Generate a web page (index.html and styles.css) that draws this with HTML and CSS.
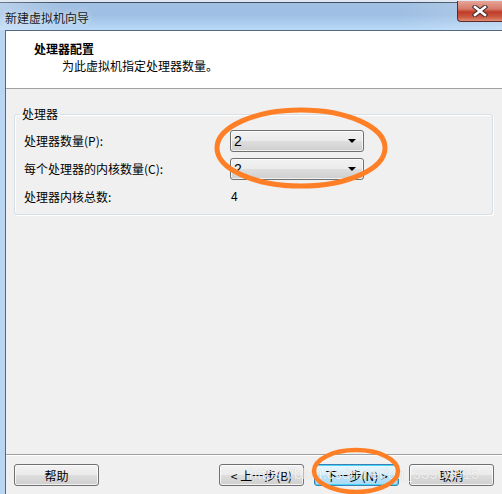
FILE: index.html
```html
<!DOCTYPE html>
<html lang="zh-CN">
<head>
    <meta charset="UTF-8">
    <title>新建虚拟机向导</title>
    <link rel="stylesheet" href="styles.css">
</head>
<body>
    <div class="window">
        <div class="titlebar">
            <span class="title">新建虚拟机向导</span>
            <button class="close" type="button" aria-label="关闭">
                <svg width="16" height="12" viewBox="0 0 16 12">
                    <path d="M3 2 L13 10 M13 2 L3 10" stroke="#3b2a2a" stroke-width="4.5" stroke-linecap="square"/>
                    <path d="M3 2 L13 10 M13 2 L3 10" stroke="#ffffff" stroke-width="2.6" stroke-linecap="square"/>
                </svg>
            </button>
        </div>

        <div class="client">
            <div class="header">
                <div class="step-title">处理器配置</div>
                <div class="step-desc">为此虚拟机指定处理器数量。</div>
            </div>

            <div class="content">
                <fieldset class="group">
                    <legend>处理器</legend>
                    <div class="rows">
                        <label for="cpuCount">处理器数量(P):</label>
                        <div class="combo" id="cpuCount"><span>2</span><i class="arrow"></i></div>

                        <label for="coreCount">每个处理器的内核数量(C):</label>
                        <div class="combo" id="coreCount"><span>2</span><i class="arrow"></i></div>

                        <span class="row-label">处理器内核总数:</span>
                        <span class="value">4</span>
                    </div>
                </fieldset>
            </div>

            <div class="footer">
                <button class="btn" type="button">帮助</button>
                <div class="nav">
                    <button class="btn" type="button">&lt; 上一步(B)</button>
                    <button class="btn btn-default" type="button">下一步(N) &gt;</button>
                    <button class="btn" type="button">取消</button>
                </div>
            </div>
        </div>

        <div class="watermark">https://blog.csdn.net/qq_33908615</div>

        <!-- hand-drawn highlight rings -->
        <svg class="marks" width="502" height="494" viewBox="0 0 502 494">
            <ellipse cx="301" cy="148" rx="84" ry="38" fill="none" stroke="#ff7f27" stroke-width="5"/>
            <ellipse cx="356" cy="471" rx="42" ry="21" fill="none" stroke="#ff7f27" stroke-width="4.5"/>
        </svg>
    </div>
</body>
</html>
```

FILE: styles.css
```css
* {
    box-sizing: border-box;
}
body {
    margin: 0;
    padding: 0;
    font-family: "Noto Sans CJK SC", "Liberation Sans", sans-serif;
    font-size: 12px;
    color: #000;
}
.window {
    position: relative;
    width: 502px;
    height: 494px;
    overflow: hidden;
    display: flex;
    flex-direction: column;
    background: #b9d5f2;
}

/* title bar */
.titlebar {
    height: 30px;
    display: flex;
    align-items: flex-start;
    border-top: 2px solid #dfe7f3;
    background:
        linear-gradient(90deg, rgba(255,255,255,0.25) 0%, rgba(255,255,255,0) 12%, rgba(255,255,255,0) 80%, rgba(255,255,255,0.2) 100%),
        linear-gradient(180deg, #3f4f63 0, #3f4f63 1px, #a2c0e2 1px, #9ebfe3 45%, #b9d9f7 100%);
}
.title {
    margin: 7px 0 0 5px;
    line-height: 18px;
    color: #1a1a1a;
    text-shadow: 0 0 6px rgba(255,255,255,0.9);
}
.close {
    margin: -1px 0 0 auto;
    width: 45px;
    height: 21px;
    padding: 0;
    border: 1px solid #5e2a2a;
    border-top: none;
    border-right: none;
    border-radius: 0 0 0 4px;
    background: linear-gradient(180deg, #e7a597 0%, #d57a6a 40%, #c03a26 55%, #cb5a43 80%, #e08c74 100%);
    display: flex;
    align-items: center;
    justify-content: center;
}

/* client area */
.client {
    flex: 1;
    margin-left: 5px;
    display: flex;
    flex-direction: column;
    border-left: 1px solid #55687e;
    border-top: 1px solid #55687e;
    background: #f0f0f0;
}
.header {
    height: 58px;
    padding: 9px 0 0 28px;
    background: #fff;
    border-bottom: 1px solid #a0a0a0;
    line-height: 17px;
}
.step-title {
    font-weight: bold;
}
.step-desc {
    margin-left: 28px;
}

.content {
    flex: 1;
    padding: 17px 9px 0 8px;
}
.group {
    margin: 0;
    padding: 8px 9px 6px 9px;
    border: 1px solid #d5dfe5;
    border-radius: 3px;
    box-shadow: inset 1px 1px 0 #fff, 1px 1px 0 #fff;
}
.group legend {
    margin-left: -4px;
    padding: 0 2px;
    line-height: 16px;
}
.rows {
    display: grid;
    grid-template-columns: 206px 134px;
    grid-auto-rows: 22px;
    row-gap: 6px;
    align-items: center;
}
.rows label,
.row-label {
    line-height: 22px;
}
.value {
    padding-left: 1px;
    font-family: "Liberation Sans", sans-serif;
    font-size: 12px;
}
.combo {
    height: 22px;
    display: flex;
    align-items: center;
    justify-content: space-between;
    padding: 0 7px 0 3px;
    border: 1px solid #707070;
    border-radius: 3px;
    background: linear-gradient(180deg, #f2f2f2 0%, #ebebeb 48%, #dddddd 52%, #cfcfcf 100%);
    box-shadow: inset 0 0 0 1px rgba(255,255,255,0.7);
    font-family: "Liberation Sans", sans-serif;
    font-size: 14px;
}
.arrow {
    width: 0;
    height: 0;
    border-left: 4px solid transparent;
    border-right: 4px solid transparent;
    border-top: 4px solid #000;
}

/* bottom button bar */
.footer {
    height: 40px;
    display: flex;
    align-items: flex-start;
    padding: 9px 0 0 8px;
    border-top: 1px solid #a0a0a0;
    box-shadow: inset 0 1px 0 #fff;
}
.nav {
    margin-left: auto;
    margin-right: 8px;
    display: flex;
    gap: 10px;
}
.btn {
    width: 85px;
    height: 22px;
    padding: 0;
    border: 1px solid #707070;
    border-radius: 3px;
    background: linear-gradient(180deg, #f2f2f2 0%, #ebebeb 48%, #dddddd 52%, #cfcfcf 100%);
    box-shadow: inset 0 0 0 1px rgba(255,255,255,0.75);
    font-family: inherit;
    font-size: 12px;
    color: #000;
}
.btn-default {
    border-color: #3c7fb1;
    background: linear-gradient(180deg, #eaf6fd 0%, #d9f0fc 48%, #bee6fd 52%, #a7d9f5 100%);
    box-shadow: inset 0 0 0 1px #48d7fb;
}

/* overlays */
.watermark {
    position: absolute;
    left: 249px;
    top: 465px;
    font-family: "Liberation Sans", sans-serif;
    font-size: 15px;
    color: rgba(255,255,255,0.8);
    text-shadow: 0 0 1px rgba(0,0,0,0.2);
    pointer-events: none;
}
.marks {
    position: absolute;
    left: 0;
    top: 0;
    pointer-events: none;
}
```
